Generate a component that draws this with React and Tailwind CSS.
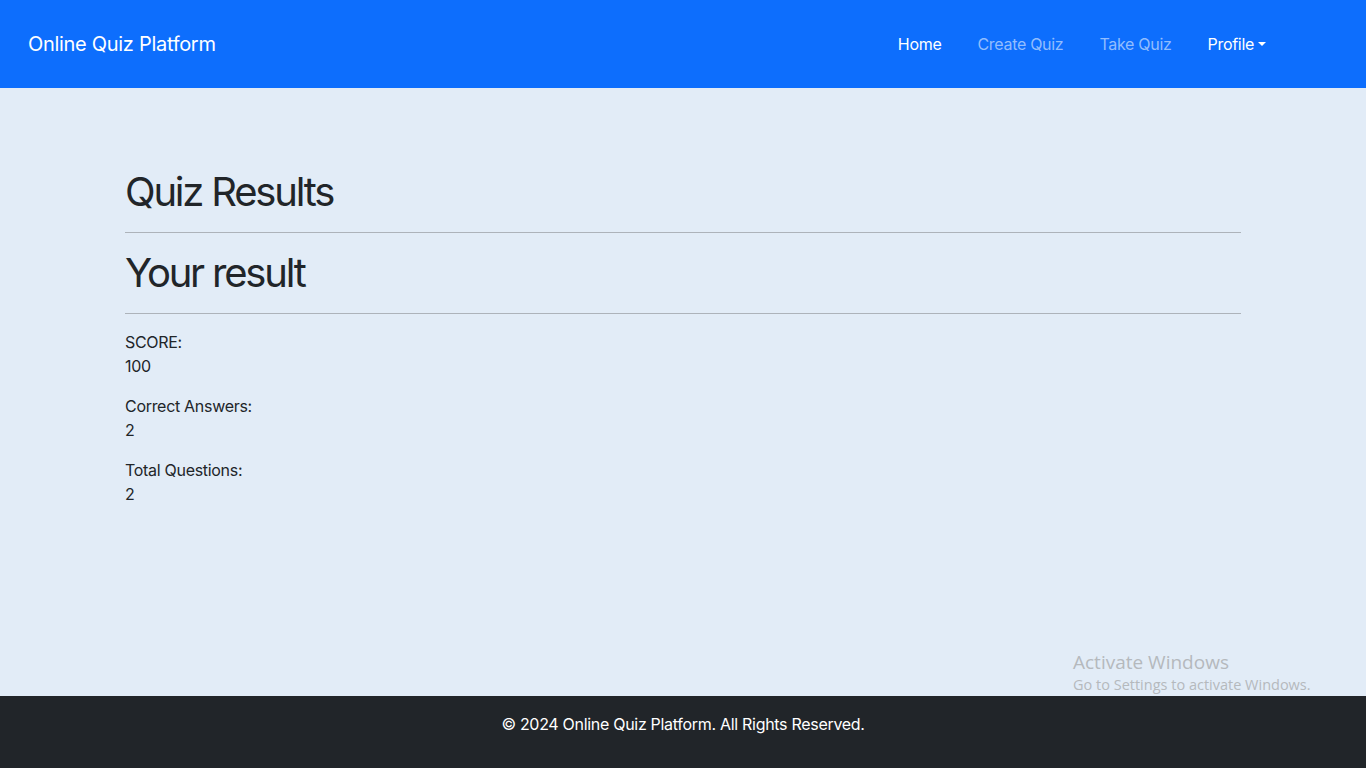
export default function App() {
  return (
    <div className="min-h-screen flex flex-col bg-[#e2ecf7] text-[#212529] font-['Inter','Liberation_Sans',sans-serif] tracking-[-0.3px]">
      <nav className="h-[88px] bg-[#0d6efd] flex items-center pl-[28px] pr-[100px]">
        <a className="text-white text-[20px] leading-[30px] -mt-[1px]">Online Quiz Platform</a>
        <div className="ml-auto flex items-center gap-[36px] text-[16px] leading-[24px] -mt-[1px]">
          <a className="text-white">Home</a>
          <a className="text-[#92bdfe]">Create Quiz</a>
          <a className="text-[#92bdfe]">Take Quiz</a>
          <a className="text-white flex items-center">
            Profile
            <span className="ml-[4px] inline-block w-0 h-0 border-l-[4.8px] border-r-[4.8px] border-t-[4.8px] border-l-transparent border-r-transparent border-t-white"></span>
          </a>
        </div>
      </nav>
      <main className="flex-1 pt-[80px]">
        <div className="w-[1116px] mx-auto">
          <h1 className="text-[40px] leading-[48px] font-normal tracking-[-2.2px]">Quiz Results</h1>
          <div className="h-px bg-[#adb3ba] my-[16px]"></div>
          <h2 className="text-[40px] leading-[48px] font-normal tracking-[-2.2px]">Your result</h2>
          <div className="h-px bg-[#adb3ba] my-[16px]"></div>
          <div className="text-[16px] leading-[24px]">
            <p className="mb-[16px]">SCORE:<br />100</p>
            <p className="mb-[16px]">Correct Answers:<br />2</p>
            <p className="mb-[16px]">Total Questions:<br />2</p>
          </div>
        </div>
      </main>
      <footer className="bg-[#212529] text-white text-center text-[16px] leading-[24px] pt-[16px] pb-[32px]">
        © 2024 Online Quiz Platform. All Rights Reserved.
      </footer>
      <div className="absolute left-[1073px] top-[649px] text-[#b5b9bd] font-['Open_Sans',sans-serif] tracking-normal pointer-events-none">
        <div className="text-[19px] leading-[26px]">Activate Windows</div>
        <div className="text-[14.5px] leading-[20px]">Go to Settings to activate Windows.</div>
      </div>
    </div>
  );
}
